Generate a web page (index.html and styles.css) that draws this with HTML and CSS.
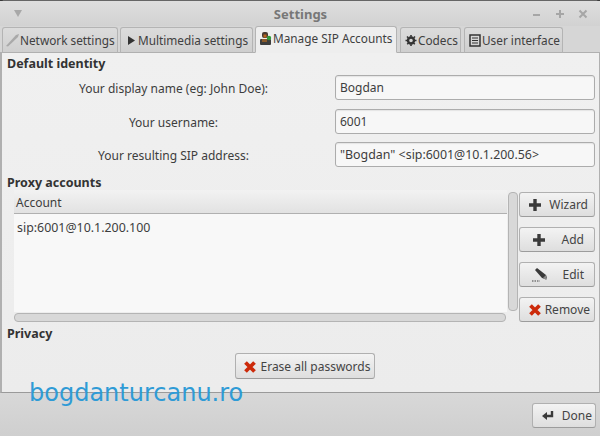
FILE: index.html
```html
<!DOCTYPE html>
<html>
<head>
<title>Settings</title>
<link rel="stylesheet" href="styles.css">
</head>
<body>
<div class="window">
   <div class="titlebar">
      <svg class="menuArrow" width="10" height="7" viewBox="0 0 10 7"><path d="M1 0h8L5 7z" fill="#a8a8a8"/></svg>
      <div class="title">Settings</div>
      <div class="winButtons">
         <svg width="10" height="10" viewBox="0 0 10 10"><path d="M1 6h7" stroke="#a6a6a6" stroke-width="2"/></svg>
         <svg width="10" height="10" viewBox="0 0 10 10"><path d="M5 1v8M1 5h8" stroke="#a6a6a6" stroke-width="2"/></svg>
         <svg width="10" height="10" viewBox="0 0 10 10"><path d="M1.500 1.500l7 7M8.500 1.500l-7 7" stroke="#a6a6a6" stroke-width="2"/></svg>
      </div>
   </div>

   <div class="tabs">
      <div class="tab tabNetwork">
         <svg width="14" height="14" viewBox="0 0 14 14"><path d="M1 13L11 2l3-1-1 3L3 13.500z" fill="#a9a9a9"/></svg>
         Network settings
      </div>
      <div class="tab tabMedia">
         <svg width="10" height="11" viewBox="0 0 10 11"><path d="M1 1l7 4.500-7 4.500z" fill="#333"/></svg>
         Multimedia settings
      </div>
      <div class="tab tabActive">
         <svg width="13" height="15" viewBox="0 0 13 15"><rect x="3" y="1" width="6" height="6" rx="2" fill="#4a3a30"/><rect x="4.500" y="3.500" width="3" height="3" fill="#b8641e"/><rect x="1" y="8" width="11" height="6" rx="1" fill="#3d3d3d"/><rect x="3" y="8" width="5" height="3" fill="#8a5a2a"/><circle cx="10" cy="7" r="2.200" fill="#2f9a3a"/></svg>
         Manage SIP Accounts
      </div>
      <div class="tab tabCodecs">
         <svg width="12" height="13" viewBox="0 0 12 13"><circle cx="6" cy="6.500" r="3" fill="none" stroke="#333" stroke-width="2.400"/><path d="M6 1v11M.5 6.500h11M2 2.500l8 8M10 2.500l-8 8" stroke="#333" stroke-width="1.600" stroke-dasharray="1.800 7.400"/></svg>
         Codecs
      </div>
      <div class="tab tabInterface">
         <svg width="12" height="13" viewBox="0 0 12 13"><rect x="1" y="1" width="10" height="11" fill="none" stroke="#333" stroke-width="1.500"/><path d="M3 4h6M3 6.500h6M3 9h6" stroke="#333"/></svg>
         User interface
      </div>
   </div>

   <div class="panel">
      <h2 class="sectionName">Default identity</h2>
      <div class="fieldRow">
         <label class="fieldName">Your display name (eg: John Doe):</label>
         <div class="fieldValue">Bogdan</div>
      </div>
      <div class="fieldRow">
         <label class="fieldName">Your username:</label>
         <div class="fieldValue">6001</div>
      </div>
      <div class="fieldRow fieldRowLast">
         <label class="fieldName">Your resulting SIP address:</label>
         <div class="fieldValue sipText">"Bogdan" &lt;sip:6001@10.1.200.56&gt;</div>
      </div>

      <h2 class="sectionName proxyName">Proxy accounts</h2>
      <div class="proxyRow">
         <div class="listArea">
            <div class="listWrap">
               <div class="list">
                  <div class="listHeader">Account</div>
                  <div class="listItem sipText">sip:6001@10.1.200.100</div>
               </div>
               <div class="vScroll"></div>
            </div>
            <div class="hScroll"></div>
         </div>
         <div class="sideButtons">
            <div class="button buttonWizard">
               <svg width="14" height="14" viewBox="0 0 14 14"><path d="M7 1v12M1 7h12" stroke="#3a3a3a" stroke-width="3.400"/></svg>
               <span class="buttonText">Wizard</span>
            </div>
            <div class="button buttonShort">
               <svg class="shortIcon" width="14" height="14" viewBox="0 0 14 14"><path d="M7 1v12M1 7h12" stroke="#3a3a3a" stroke-width="3.400"/></svg>
               <span class="buttonText">Add</span>
            </div>
            <div class="button buttonShort">
               <svg class="shortIcon" width="16" height="15" viewBox="0 0 16 15"><path d="M3 3l2-2 9 7 1 3-2 1-3-1z" fill="#3a3a3a"/><path d="M11 11l3-3 1 4-1 1z" fill="#8a8a8a"/><path d="M0 14h8" stroke="#777" stroke-width="1.500" stroke-dasharray="1.500 1"/></svg>
               <span class="buttonText">Edit</span>
            </div>
            <div class="button">
               <svg width="14" height="14" viewBox="0 0 14 14"><path d="M2.500 2.500l9 9M11.500 2.500l-9 9" stroke="#cc2a0a" stroke-width="3.800"/></svg>
               <span class="buttonText">Remove</span>
            </div>
         </div>
      </div>

      <h2 class="sectionName privacyName">Privacy</h2>
      <div class="privacyRow">
         <div class="button eraseButton">
            <svg width="14" height="14" viewBox="0 0 14 14"><path d="M2.500 2.500l9 9M11.500 2.500l-9 9" stroke="#cc2a0a" stroke-width="3.800"/></svg>
            <span>Erase all passwords</span>
         </div>
      </div>
   </div>

   <div class="footer">
      <div class="button doneButton">
         <svg width="14" height="12" viewBox="0 0 14 12"><path d="M11 1v5H5" fill="none" stroke="#3a3a3a" stroke-width="2.400"/><path d="M6 2v8L1 6z" fill="#3a3a3a"/></svg>
         <span class="buttonText">Done</span>
      </div>
   </div>

   <div class="watermark">bogdanturcanu.ro</div>
</div>
</body>
</html>
```

FILE: styles.css
```css
html, body
{
    margin: 0;
    padding: 0;
}

body
{
    width: 600px;
    height: 436px;
    overflow: hidden;
    background: #3a3a3a;
    font-family: "Noto Sans", "Open Sans", sans-serif;
    font-size: 12px;
    color: #3d3d3d;
}

svg
{
    flex: none;
}

.window
{
    position: relative;
    height: 436px;
    box-sizing: border-box;
    border-top: 1px solid #666;
    border-radius: 5px 5px 0 0;
    background: #d6d6d6;
    display: flex;
    flex-direction: column;
}

.titlebar
{
    height: 25px;
    flex: none;
    display: flex;
    align-items: center;
    padding: 0 13px;
    background: linear-gradient(#dedede, #d2d2d2);
}

.menuArrow
{
    margin-top: -1px;
}

.title
{
    flex: 1;
    text-align: center;
    font-size: 13px;
    font-weight: bold;
    color: #777;
    padding-left: 46px;
}

.winButtons
{
    display: flex;
    gap: 13px;
    margin-right: -1px;
}

.tabs
{
    height: 27px;
    flex: none;
    display: flex;
    gap: 2px;
    padding-left: 2px;
    align-items: flex-end;
    position: relative;
    z-index: 1;
    margin-bottom: -1px;
}

.tab
{
    height: 26px;
    box-sizing: border-box;
    display: flex;
    align-items: center;
    gap: 1px;
    border: 1px solid #b4b4b4;
    border-bottom: 1px solid #b0b0b0;
    border-radius: 3px 3px 0 0;
    background: linear-gradient(#dcdcdc, #cfcfcf);
    font-size: 11.800px;
    white-space: nowrap;
    color: #404040;
}

.tabNetwork
{
    width: 116px;
    padding-left: 2px;
}

.tabMedia
{
    width: 133px;
    padding-left: 6px;
}

.tabActive
{
    width: 142px;
    height: 27px;
    background: #eeeeee;
    border-bottom: 1px solid #eeeeee;
    padding: 0 0 3px 3px;
}

.tabCodecs
{
    width: 61px;
    margin-left: 1px;
    padding-left: 4px;
}

.tabInterface
{
    width: 99px;
    margin-left: 1px;
    padding-left: 4px;
}

.panel
{
    height: 341px;
    flex: none;
    box-sizing: border-box;
    border: 1px solid #b0b0b0;
    border-left-width: 2px;
    border-bottom: 1px solid #9a9a9a;
    background: linear-gradient(#f0f0f0, #ececec);
    padding: 2px 4px 0 5px;
}

.sectionName
{
    margin: 0;
    font-size: 12.500px;
    line-height: 18px;
    font-weight: bold;
    color: #333;
}

.fieldRow
{
    display: flex;
    align-items: center;
    height: 25px;
    margin-top: 9px;
}

.sectionName + .fieldRow
{
    margin-top: 2px;
}

.fieldRowLast
{
    margin-top: 8px;
}

.fieldName
{
    width: 328px;
    padding: 1px 0 0 5px;
    box-sizing: border-box;
    text-align: center;
    flex: none;
}

.fieldValue
{
    flex: 1;
    height: 25px;
    box-sizing: border-box;
    line-height: 24px;
    padding: 0 4px;
    border: 1px solid #acacac;
    border-radius: 3px;
    background: #f7f7f7;
    box-shadow: inset 0 1px 1px #e4e4e4;
}

.sipText
{
    font-size: 12.400px;
}

.proxyName
{
    margin-top: 7px;
}

.proxyRow
{
    display: flex;
    gap: 1px;
    height: 132px;
    margin-top: -2px;
}

.listArea
{
    margin-left: 7px;
    width: 504px;
    flex: none;
    display: flex;
    flex-direction: column;
}

.listWrap
{
    display: flex;
    gap: 1px;
    height: 122px;
}

.list
{
    width: 493px;
    flex: none;
    background: #f8f8f8;
    box-sizing: border-box;
}

.listHeader
{
    height: 24px;
    line-height: 26px;
    padding-left: 2px;
    box-sizing: border-box;
    background: linear-gradient(#f2f2f2, #e2e2e2);
    border-bottom: 1px solid #b0b0b0;
}

.listItem
{
    padding: 5px 3px;
    line-height: 18px;
}

.vScroll
{
    width: 8px;
    margin: 2px 0 1px;
    border: 1px solid #b4b4b4;
    border-radius: 4px;
    background: #d8d8d8;
}

.hScroll
{
    margin-top: 1px;
    width: 490px;
    height: 7px;
    border: 1px solid #b4b4b4;
    border-radius: 4px;
    background: #d8d8d8;
}

.sideButtons
{
    display: flex;
    flex-direction: column;
    gap: 10px;
    flex: 1;
    min-width: 0;
    margin-top: 2px;
}

.button
{
    height: 25px;
    box-sizing: border-box;
    display: flex;
    align-items: center;
    padding: 0 4px 0 8px;
    border: 1px solid #b0b0b0;
    border-bottom-color: #9c9c9c;
    border-radius: 3px;
    background: linear-gradient(#f3f3f3, #dedede);
    color: #444;
}

.buttonWizard
{
    padding-right: 6px;
}

.buttonShort
{
    padding-right: 10px;
}

.buttonText
{
    flex: 1;
    text-align: right;
}

.shortIcon
{
    margin-left: 4px;
}

.privacyName
{
    margin-top: 3px;
}

.privacyRow
{
    display: flex;
    justify-content: center;
    margin-top: 10px;
    padding-left: 7px;
}

.eraseButton
{
    width: 140px;
    height: 26px;
    gap: 4px;
    padding: 1px 4px 0 7px;
    white-space: nowrap;
}

.footer
{
    flex: 1;
    display: flex;
    justify-content: flex-end;
    align-items: flex-start;
    padding: 10px 4px 0 0;
    background: linear-gradient(#d8d8d8, #cfcfcf);
}

.doneButton
{
    width: 64px;
    padding-right: 3px;
}

/* site name stamped over the window */
.watermark
{
    position: absolute;
    left: 29px;
    top: 378px;
    font-family: "DejaVu Sans", sans-serif;
    font-size: 24px;
    line-height: 28px;
    color: #2f9bd6;
    white-space: nowrap;
}
```
